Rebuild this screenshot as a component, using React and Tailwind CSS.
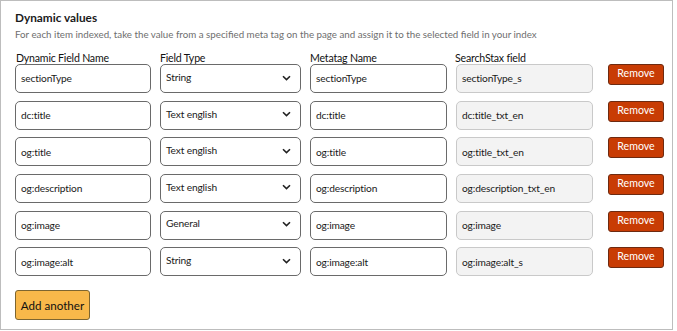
import React from "react";

const rows = [
  ["sectionType", "String", "sectionType", "sectionType_s"],
  ["dc:title", "Text english", "dc:title", "dc:title_txt_en"],
  ["og:title", "Text english", "og:title", "og:title_txt_en"],
  ["og:description", "Text english", "og:description", "og:description_txt_en"],
  ["og:image", "General", "og:image", "og:image"],
  ["og:image:alt", "String", "og:image:alt", "og:image:alt_s"],
];

function Chevron() {
  return (
    <svg width="9" height="6" viewBox="0 0 9 6" className="shrink-0">
      <path d="M1 1.2 L4.5 4.6 L8 1.2" fill="none" stroke="#222" strokeWidth="1.6" />
    </svg>
  );
}

export default function App() {
  return (
    <div
      className="w-[673px] h-[330px] border border-[#bdbdbd] bg-white text-[#1a1a1a] pl-[14px] pt-[9px]"
      style={{ fontFamily: "Lato, 'Liberation Sans', sans-serif" }}
    >
      <div className="text-[11.8px] font-bold leading-[16px] text-[#1a1a1a]">Dynamic values</div>
      <div className="text-[9.75px] leading-[14px] mt-[1px] text-[#6e6e6e]">
        For each item indexed, take the value from a specified meta tag on the page and assign it to the selected field in your index
      </div>
      <div className="flex text-[10.6px] tracking-[-0.2px] leading-[14px] mt-[10px] text-[#111]">
        <div className="w-[145px] pl-[1px]">Dynamic Field Name</div>
        <div className="w-[150px]">Field Type</div>
        <div className="w-[145px]">Metatag Name</div>
        <div>SearchStax field</div>
      </div>
      <div className="mt-[-1px] flex flex-col gap-[7.67px]">
        {rows.map((r, i) => (
          <div key={i} className="flex items-start text-[10.2px]">
            <div className="w-[136px] h-[29px] border border-[#6a6a6a] rounded-[5px] flex items-center pl-[5px] pt-[1px] tracking-[-0.15px]">
              {r[0]}
            </div>
            <div className="ml-[9px] w-[141px] h-[29px] border border-[#6a6a6a] rounded-[5px] flex items-center justify-between pl-[5px] pr-[9px] pb-[2px] tracking-[-0.15px]">
              <span>{r[1]}</span>
              <Chevron />
            </div>
            <div className="ml-[9px] w-[137px] h-[29px] border border-[#6a6a6a] rounded-[5px] flex items-center pl-[5px] pt-[1px] tracking-[-0.15px]">
              {r[2]}
            </div>
            <div className="ml-[9px] w-[137px] h-[29px] border border-[#c9c9c9] bg-[#f3f3f3] rounded-[5px] flex items-center pl-[5px] pt-[1px] tracking-[-0.15px]">
              {r[3]}
            </div>
            <div className="ml-[15px] w-[56px] h-[21px] bg-[#c83c04] border border-[#6e2a10] rounded-[3px] text-white text-[10.6px] flex items-center justify-center pb-[1px]">
              Remove
            </div>
          </div>
        ))}
      </div>
      <div className="mt-[14px] w-[75px] h-[30px] bg-[#f8b84a] border border-[#7d6530] rounded-[3px] flex items-center justify-center text-[11.6px] text-[#111]">
        Add another
      </div>
    </div>
  );
}
